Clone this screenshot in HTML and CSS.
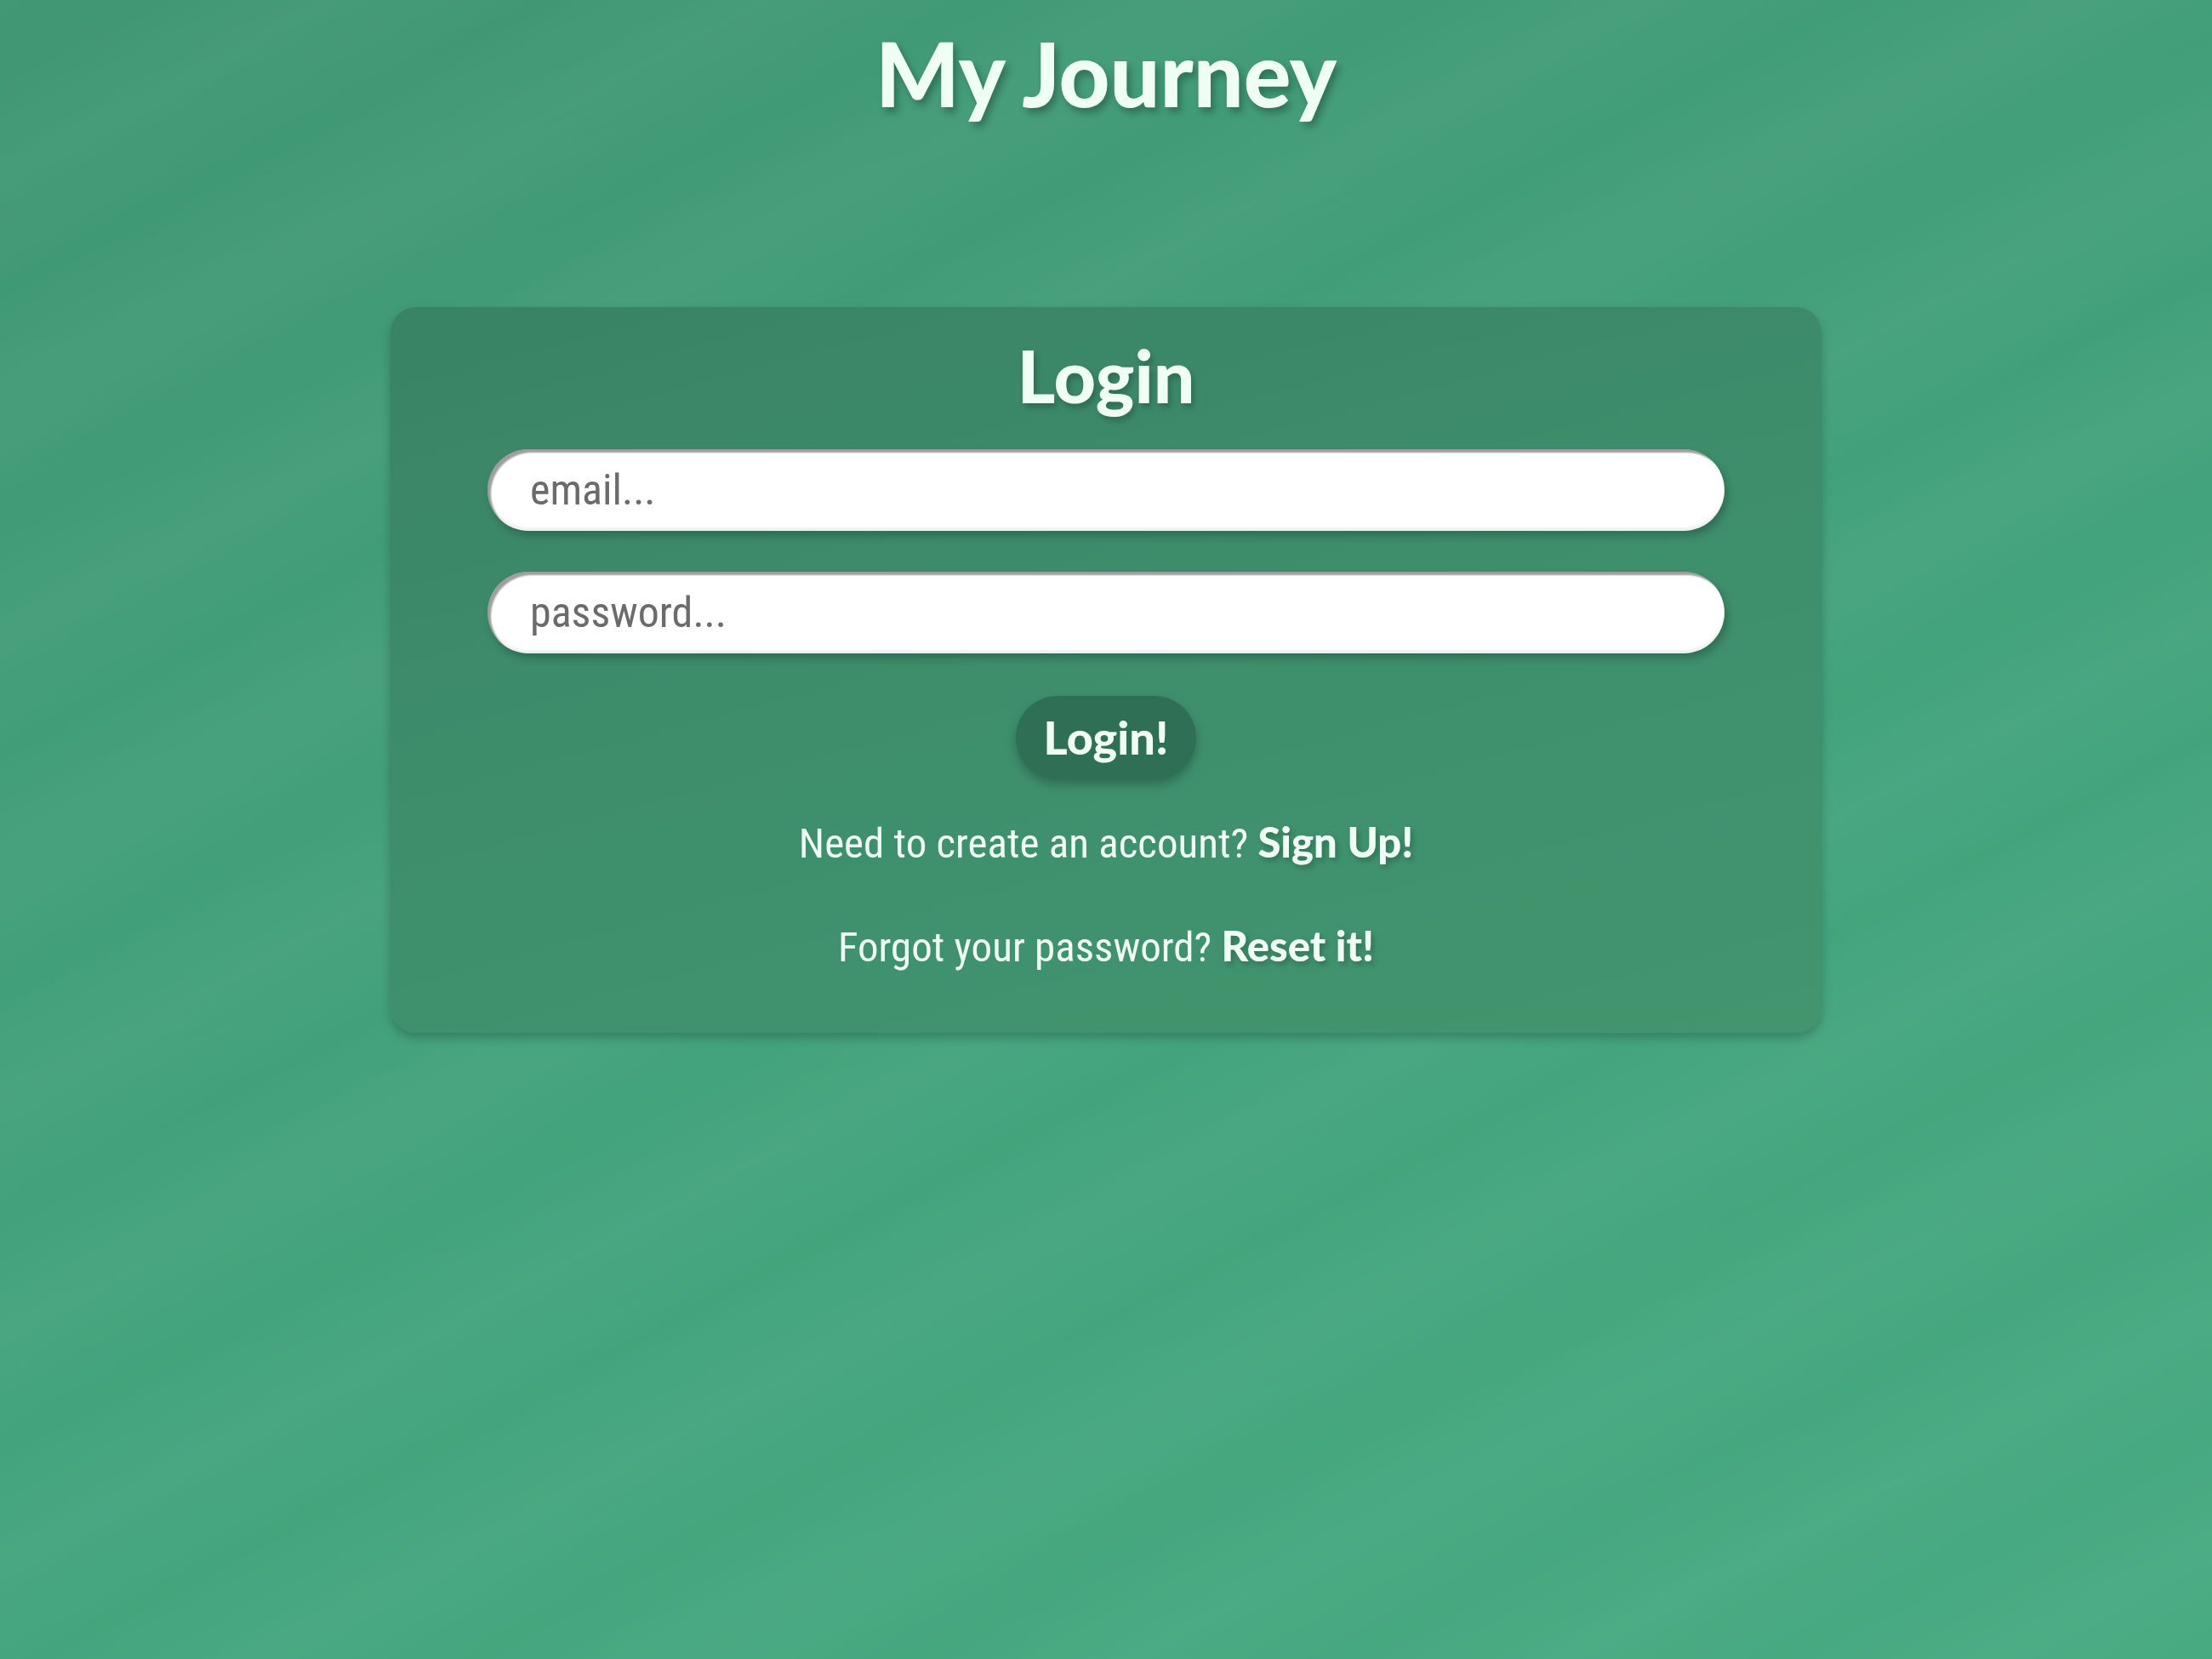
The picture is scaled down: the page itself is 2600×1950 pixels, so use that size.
FILE: index.html
```html
<!DOCTYPE html>
<html lang="en">
<head>
<meta charset="utf-8">
<title>My Journey - Login</title>
<link rel="stylesheet" href="styles.css">
</head>
<body>
<div class="page">
  <header class="site-header">
    <h1 class="site-title">My Journey</h1>
  </header>
  <main class="card">
    <h2 class="card-title">Login</h2>
    <form class="login-form">
      <input class="field" type="email" placeholder="email...">
      <input class="field" type="password" placeholder="password...">
      <button class="btn" type="button">Login!</button>
    </form>
    <p class="note">Need to create an account? <a class="link" href="#">Sign Up!</a></p>
    <p class="note">Forgot your password? <a class="link" href="#">Reset it!</a></p>
  </main>
</div>
</body>
</html>
```
FILE: styles.css
```css
html, body {
  margin: 0;
  padding: 0;
}
body {
  min-height: 1950px;
  background:
    repeating-linear-gradient(-28deg, rgba(255,255,255,0) 0px, rgba(255,255,255,0.035) 120px, rgba(255,255,255,0) 240px),
    linear-gradient(160deg, #3f9673 0%, #43a37b 55%, #46aa80 100%);
  font-family: "Roboto Condensed", "Liberation Sans Narrow", "DejaVu Sans Condensed", Roboto, sans-serif;
  color: #f0fff6;
}
.page {
  display: flex;
  flex-direction: column;
  align-items: center;
}
.site-header {
  padding-top: 24px;
}
.site-title {
  margin: 0;
  font-family: Lato, "Open Sans", sans-serif;
  font-weight: 900;
  font-size: 104px;
  line-height: 1.2;
  color: #f0fff6;
  text-shadow: 4px 6px 8px rgba(0, 0, 0, 0.28);
}
.card {
  margin-top: 212px;
  width: 1682px;
  box-sizing: border-box;
  padding: 28px 114px 70px;
  border-radius: 30px;
  background: linear-gradient(165deg, #398365 0%, #3e8e6b 50%, #42956f 100%);
  box-shadow: 0 6px 12px rgba(0, 0, 0, 0.22);
  display: flex;
  flex-direction: column;
  align-items: center;
}
.card-title {
  margin: 0;
  font-family: Lato, "Open Sans", sans-serif;
  font-weight: 900;
  font-size: 86px;
  line-height: 1.2;
  color: #f0fff6;
  text-shadow: 3px 5px 7px rgba(0, 0, 0, 0.22);
}
.login-form {
  margin-top: 36px;
  width: 100%;
  display: flex;
  flex-direction: column;
  align-items: center;
  gap: 48px;
}
.field {
  width: 100%;
  height: 96px;
  box-sizing: border-box;
  border: none;
  border-radius: 48px;
  padding: 0 50px;
  background: #ffffff;
  font-family: inherit;
  font-size: 50px;
  color: #6b6b6b;
  outline: none;
  box-shadow: inset 4px 4px 2px rgba(0, 0, 0, 0.38), inset 0 -4px 2px rgba(0, 0, 0, 0.06), 4px 6px 10px rgba(0, 0, 0, 0.22);
}
.field::placeholder {
  color: #6b6b6b;
}
.btn {
  margin-top: 2px;
  width: 212px;
  height: 98px;
  border: none;
  border-radius: 49px;
  background: #2f6f55;
  color: #f0fff6;
  font-family: Lato, "Open Sans", sans-serif;
  font-weight: 900;
  font-size: 54px;
  box-shadow: 0 6px 12px rgba(0, 0, 0, 0.25);
  cursor: pointer;
}
.note {
  margin: 0;
  margin-top: 44px;
  font-size: 49px;
  line-height: 1.2;
  color: #f0fff6;
}
.note + .note {
  margin-top: 60px;
}
.link {
  color: #f0fff6;
  text-decoration: none;
  font-family: Lato, "Open Sans", sans-serif;
  font-weight: 900;
  text-shadow: 3px 4px 6px rgba(0, 0, 0, 0.22);
}
```
